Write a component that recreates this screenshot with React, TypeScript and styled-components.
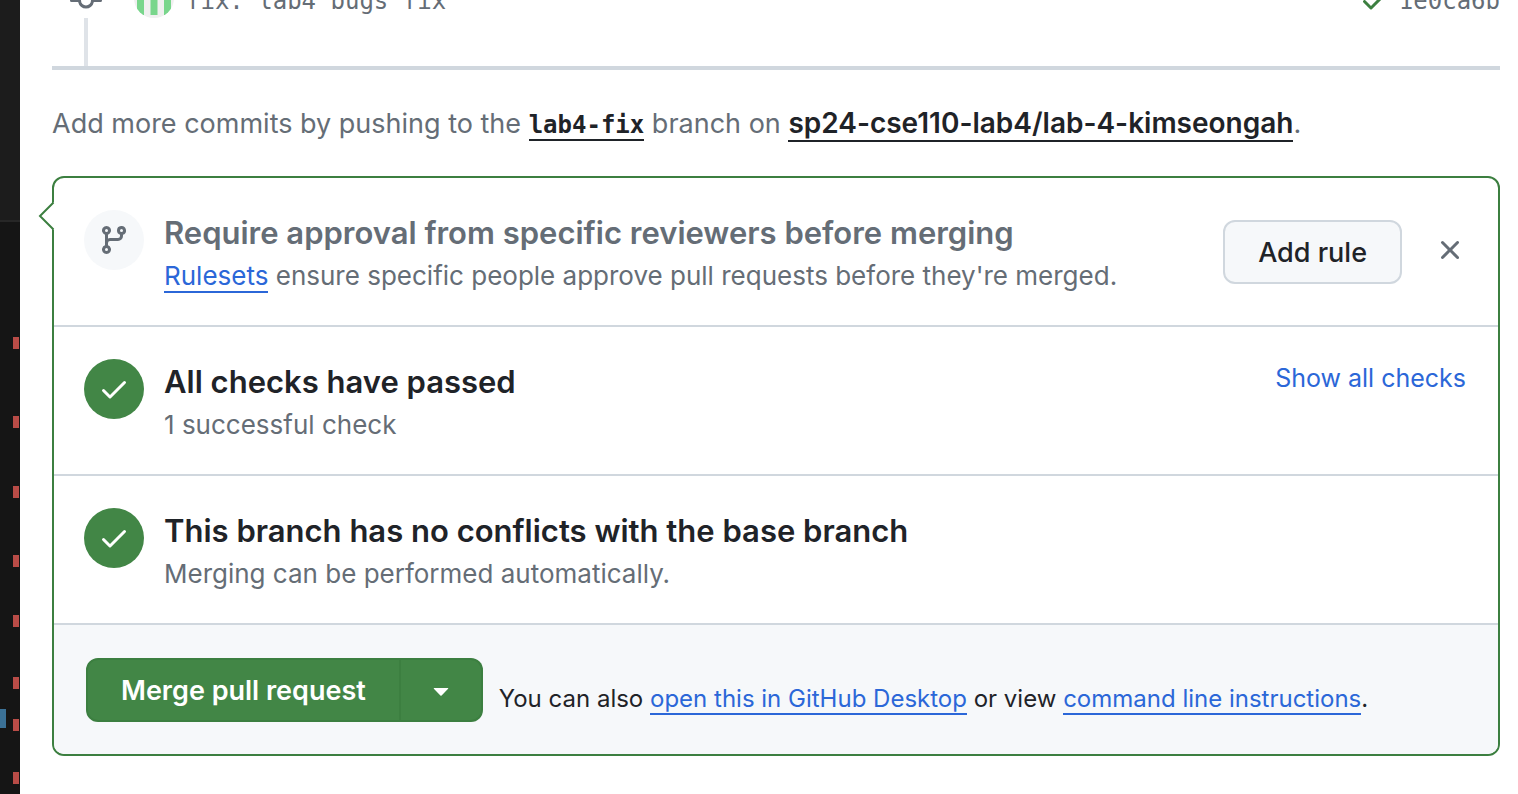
import React from 'react';
import styled, { createGlobalStyle } from 'styled-components';

const sans = `Inter, 'Liberation Sans', sans-serif`;
const mono = `'DejaVu Sans Mono', 'Liberation Mono', monospace`;

const color = {
  fg: '#1f2328',
  muted: '#656d76',
  link: '#2b67d8',
  green: '#428646',
  greenBorder: '#3c7f40',
  border: '#d0d7de',
  subtle: '#f6f8fa',
};

const GlobalStyle = createGlobalStyle`
  *, *::before, *::after { box-sizing: border-box; }
  body { margin: 0; background: #fff; color: ${color.fg}; font-family: ${sans}; }
  h3, p { margin: 0; }
  button { font-family: inherit; cursor: pointer; }
`;

const Page = styled.div`
  display: grid;
  grid-template-columns: 20px minmax(0, 1fr);
  min-height: 100vh;
`;

const Ruler = styled.aside`
  position: relative;
  display: grid;
  grid-template-rows: 222px 1fr;
  overflow: hidden;
`;

const RulerHead = styled.div`
  background: #1c1c1c;
  border-bottom: 2px solid #272727;
`;

const RulerBody = styled.div`
  background: #151515;
`;

const Mark = styled.span<{ $kind: 'error' | 'info' }>`
  position: absolute;
  left: ${(p) => (p.$kind === 'error' ? 13 : 0)}px;
  width: 6px;
  height: ${(p) => (p.$kind === 'error' ? 12 : 19)}px;
  background: ${(p) => (p.$kind === 'error' ? '#b94c47' : '#3b7196')};
`;

const Main = styled.main`
  padding: 0 18px 38px 32px;
`;

const Timeline = styled.section`
  display: flex;
  flex-direction: column;
  border-bottom: 4px solid ${color.border};
`;

const CommitRow = styled.div`
  display: flex;
  align-items: flex-end;
  height: 18px;
  padding-left: 18px;
  color: ${color.muted};
  font-family: ${mono};
  font-size: 24px;
  line-height: 34px;
  white-space: pre;
`;

const CommitIcon = styled.svg`
  flex: none;
  width: 32px;
  height: 32px;
  margin-bottom: 1px;
  fill: currentColor;
`;

const Avatar = styled.svg`
  flex: none;
  width: 40px;
  height: 40px;
  margin: 0 12px 0 32px;
`;

const CommitMessage = styled.span`
  flex: 1;
`;

const CheckStatus = styled(CommitIcon)`
  margin: 0 8px 2px 0;
  color: ${color.greenBorder};
`;

const Stem = styled.div`
  width: 4px;
  height: 48px;
  margin-left: 32px;
  background: #dfe3e8;
`;

const PushHint = styled.p`
  padding: 32px 0 30px;
  color: ${color.muted};
  font-size: 27px;
  line-height: 42px;
`;

const StrongLink = styled.a<{ $mono?: boolean }>`
  color: ${color.fg};
  font-family: ${(p) => (p.$mono ? mono : 'inherit')};
  font-size: ${(p) => (p.$mono ? '24px' : '28px')};
  font-weight: ${(p) => (p.$mono ? 700 : 600)};
  text-decoration: none;
  border-bottom: 2px solid ${color.fg};
`;

const MergeBox = styled.section`
  position: relative;
  border: 2px solid ${color.greenBorder};
  border-radius: 12px;
`;

const Caret = styled.svg`
  position: absolute;
  top: 23px;
  left: -17px;
  width: 18px;
  height: 30px;
`;

const Row = styled.div`
  display: flex;
  align-items: flex-start;
  padding: 32px 32px 32px 30px;
  border-bottom: 2px solid ${color.border};
`;

const Badge = styled.span<{ $passed?: boolean }>`
  flex: none;
  display: flex;
  align-items: center;
  justify-content: center;
  width: 60px;
  height: 60px;
  margin-right: 20px;
  border-radius: 50%;
  background: ${(p) => (p.$passed ? color.green : color.subtle)};
  color: ${(p) => (p.$passed ? '#fff' : color.muted)};
`;

const Icon = styled.svg`
  display: block;
  width: 32px;
  height: 32px;
  fill: currentColor;
`;

const RowText = styled.div`
  display: flex;
  flex: 1;
  flex-direction: column;
  gap: 2px;
  min-width: 0;
`;

const Title = styled.h3<{ $muted?: boolean }>`
  color: ${(p) => (p.$muted ? color.muted : color.fg)};
  font-size: 31px;
  font-weight: 600;
  line-height: 46px;
`;

const Detail = styled.p`
  color: ${color.muted};
  font-size: 26px;
  line-height: 35px;
`;

const Link = styled.a`
  color: ${color.link};
  text-decoration: none;
  border-bottom: 2px solid ${color.link};
`;

const ToggleLink = styled.button`
  padding: 0;
  border: 0;
  background: none;
  color: ${color.link};
  font-size: 25px;
  line-height: 39px;
`;

const RowActions = styled.div`
  display: flex;
  gap: 32px;
  padding-top: 10px;
`;

const AddRule = styled.button`
  height: 64px;
  padding: 0 33px;
  border: 2px solid ${color.border};
  border-radius: 12px;
  background: ${color.subtle};
  color: ${color.fg};
  font-size: 27px;
  font-weight: 500;
`;

const Dismiss = styled.button`
  padding: 14px 0 18px;
  border: 0;
  background: none;
  color: ${color.muted};
`;

const Footer = styled.div`
  display: flex;
  align-items: center;
  gap: 16px;
  padding: 33px 32px 32px;
  border-radius: 0 0 10px 10px;
  background: ${color.subtle};
`;

const ButtonGroup = styled.div`
  display: flex;
  flex: none;
`;

const MergeButton = styled.button`
  height: 64px;
  padding: 0 33px;
  border: 2px solid ${color.greenBorder};
  border-radius: 12px 0 0 12px;
  background: ${color.green};
  color: #fff;
  font-size: 27px;
  font-weight: 600;
`;

const MergeMenuButton = styled.button`
  display: flex;
  align-items: center;
  justify-content: center;
  width: 82px;
  height: 64px;
  padding: 0;
  border: 2px solid ${color.greenBorder};
  border-left: 0;
  border-radius: 0 12px 12px 0;
  background: ${color.green};
  color: #fff;
`;

const FooterNote = styled.p`
  padding-top: 18px;
  font-size: 24px;
  line-height: 36px;
`;

const marks: { kind: 'error' | 'info'; top: number }[] = [
  { kind: 'error', top: 337 },
  { kind: 'error', top: 416 },
  { kind: 'error', top: 486 },
  { kind: 'error', top: 555 },
  { kind: 'error', top: 615 },
  { kind: 'error', top: 677 },
  { kind: 'info', top: 709 },
  { kind: 'error', top: 719 },
  { kind: 'error', top: 772 },
];

const checkPath =
  'M13.78 4.22a.75.75 0 0 1 0 1.06l-7.25 7.25a.75.75 0 0 1-1.06 0L2.22 9.28a.751.751 0 0 1 .018-1.042.751.751 0 0 1 1.042-.018L6 10.94l6.72-6.72a.75.75 0 0 1 1.06 0Z';

const PassedBadge = () => (
  <Badge $passed>
    <Icon viewBox="0 0 16 16" aria-hidden="true">
      <path d={checkPath} />
    </Icon>
  </Badge>
);

export default function App() {
  return (
    <>
      <GlobalStyle />
      <Page>
        <Ruler aria-hidden="true">
          <RulerHead />
          <RulerBody />
          {marks.map((m) => (
            <Mark key={m.top} $kind={m.kind} style={{ top: m.top }} />
          ))}
        </Ruler>
        <Main>
          <Timeline>
            <CommitRow>
              <CommitIcon viewBox="0 0 16 16" aria-hidden="true">
                <path d="M11.93 8.5a4.002 4.002 0 0 1-7.86 0H.75a.75.75 0 0 1 0-1.5h3.32a4.002 4.002 0 0 1 7.86 0h3.32a.75.75 0 0 1 0 1.5Zm-1.43-.75a2.5 2.5 0 1 0-5 0 2.5 2.5 0 0 0 5 0Z" />
              </CommitIcon>
              <Avatar viewBox="0 0 40 40" aria-hidden="true">
                <defs>
                  <clipPath id="avatar-round">
                    <circle cx="20" cy="20" r="20" />
                  </clipPath>
                </defs>
                <g clipPath="url(#avatar-round)">
                  <rect width="40" height="40" fill="#f0f0f0" />
                  <path d="M3 3h7v34H3zM16.500 3h7v34h-7zM30 3h7v34h-7z" fill="#79d68c" />
                </g>
              </Avatar>
              <CommitMessage>fix: lab4 bugs fix</CommitMessage>
              <CheckStatus viewBox="0 0 16 16" aria-hidden="true">
                <path d={checkPath} />
              </CheckStatus>
              <span>1e0ca6b</span>
            </CommitRow>
            <Stem />
          </Timeline>

          <PushHint>
            Add more commits by pushing to the <StrongLink $mono href="#branch">lab4-fix</StrongLink> branch on{' '}
            <StrongLink href="#repo">sp24-cse110-lab4/lab-4-kimseongah</StrongLink>.
          </PushHint>

          <MergeBox>
            <Caret viewBox="0 0 18 30" aria-hidden="true">
              <path d="M17 1 3 15l14 14z" fill="#fff" />
              <path d="M16.500 1.500 3 15l13.500 13.500" fill="none" stroke={color.greenBorder} strokeWidth="2" />
            </Caret>
            <Row>
              <Badge>
                <Icon viewBox="0 0 16 16" aria-hidden="true">
                  <path d="M9.5 3.25a2.25 2.25 0 1 1 3 2.122V6A2.5 2.5 0 0 1 10 8.500H6a1 1 0 0 0-1 1v1.128a2.251 2.251 0 1 1-1.500 0V5.372a2.250 2.250 0 1 1 1.500 0v1.836A2.493 2.493 0 0 1 6 7h4a1 1 0 0 0 1-1v-.628A2.250 2.250 0 0 1 9.500 3.250Zm-6 0a.75.75 0 1 0 1.500 0 .75.75 0 0 0-1.500 0Zm8.250-.75a.75.75 0 1 0 0 1.500.75.75 0 0 0 0-1.500ZM4.250 12a.75.75 0 1 0 0 1.500.75.75 0 0 0 0-1.500Z" />
                </Icon>
              </Badge>
              <RowText>
                <Title $muted>Require approval from specific reviewers before merging</Title>
                <Detail>
                  <Link href="#rulesets">Rulesets</Link> ensure specific people approve pull requests before they're
                  merged.
                </Detail>
              </RowText>
              <RowActions>
                <AddRule type="button">Add rule</AddRule>
                <Dismiss type="button" aria-label="Dismiss">
                  <Icon viewBox="0 0 16 16" aria-hidden="true">
                    <path d="M3.72 3.72a.75.75 0 0 1 1.060 0L8 6.940l3.220-3.220a.749.749 0 0 1 1.275.326.749.749 0 0 1-.215.734L9.060 8l3.220 3.220a.749.749 0 0 1-.326 1.275.749.749 0 0 1-.734-.215L8 9.060l-3.220 3.220a.751.751 0 0 1-1.042-.018.751.751 0 0 1-.018-1.042L6.940 8 3.720 4.780a.75.75 0 0 1 0-1.060Z" />
                  </Icon>
                </Dismiss>
              </RowActions>
            </Row>
            <Row>
              <PassedBadge />
              <RowText>
                <Title>All checks have passed</Title>
                <Detail>1 successful check</Detail>
              </RowText>
              <ToggleLink type="button">Show all checks</ToggleLink>
            </Row>
            <Row>
              <PassedBadge />
              <RowText>
                <Title>This branch has no conflicts with the base branch</Title>
                <Detail>Merging can be performed automatically.</Detail>
              </RowText>
            </Row>
            <Footer>
              <ButtonGroup>
                <MergeButton type="button">Merge pull request</MergeButton>
                <MergeMenuButton type="button" aria-label="Select merge method">
                  <Icon viewBox="0 0 16 16" aria-hidden="true">
                    <path d="m4.427 7.427 3.396 3.396a.25.25 0 0 0 .354 0l3.396-3.396A.25.25 0 0 0 11.396 7H4.604a.25.25 0 0 0-.177.427Z" />
                  </Icon>
                </MergeMenuButton>
              </ButtonGroup>
              <FooterNote>
                You can also <Link href="#desktop">open this in GitHub Desktop</Link> or view{' '}
                <Link href="#cli">command line instructions</Link>.
              </FooterNote>
            </Footer>
          </MergeBox>
        </Main>
      </Page>
    </>
  );
}
